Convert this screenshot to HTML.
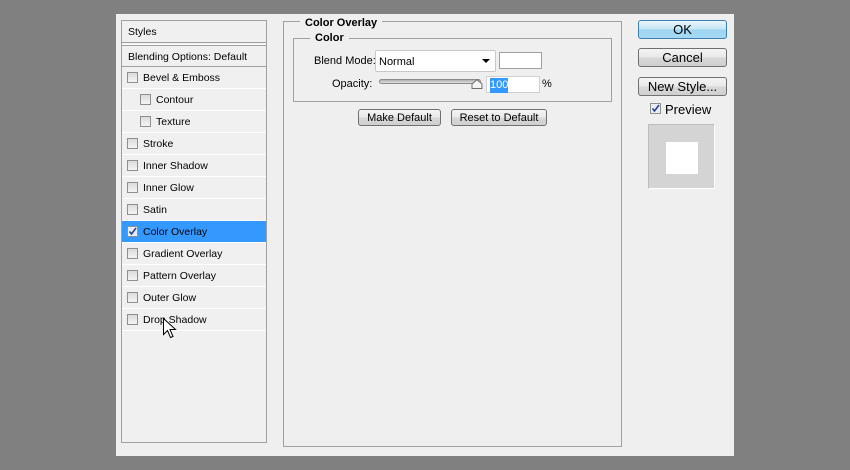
<!DOCTYPE html>
<html><head><meta charset="utf-8"><style>
*{box-sizing:border-box;margin:0;padding:0}
body{width:850px;height:470px;background:#808080;position:relative;overflow:hidden;font-family:"Liberation Sans",sans-serif;font-size:11px;color:#000}
.dlg{position:absolute;left:116px;top:14px;width:618px;height:442px;background:#efefef}
.a{position:absolute}
.list{left:5px;top:6px;width:146px;height:423px;border:1px solid #a0a0a0;background:#f0f0f0}
.row{position:absolute;left:0;width:144px;height:22px;border-bottom:1px solid #fff;line-height:23px;font-size:10.5px}
.cb{position:absolute;top:5px;width:11px;height:11px;border:1px solid #8f8f8f;background:linear-gradient(#dcdcdc,#f4f4f4)}
.fs{border:1px solid #a0a0a0}
.btn{position:absolute;border:1px solid #707070;border-radius:3px;background:linear-gradient(#f4f4f4 0%,#e8e8e8 50%,#d8d8d8 51%,#cfcfcf 100%);text-align:center}
</style></head><body>
<div class="dlg">
 <div class="a list">
  <div class="row" style="top:0;height:22px;border-bottom:1px solid #a0a0a0;padding-left:6px">Styles</div>
  <div class="a" style="left:0;top:23px;width:144px;height:2px;border-bottom:1px solid #a0a0a0;background:#fff"></div>
  <div class="row" style="top:25px;height:21px;border-bottom:1px solid #a0a0a0;padding-left:6px">Blending Options: Default</div>
  <div class="row" style="top:46px"><span class="cb" style="left:5px"></span><span class="a" style="left:21px">Bevel &amp; Emboss</span></div>
  <div class="row" style="top:68px"><span class="cb" style="left:18px"></span><span class="a" style="left:34px">Contour</span></div>
  <div class="row" style="top:90px"><span class="cb" style="left:18px"></span><span class="a" style="left:34px">Texture</span></div>
  <div class="row" style="top:112px"><span class="cb" style="left:5px"></span><span class="a" style="left:21px">Stroke</span></div>
  <div class="row" style="top:134px"><span class="cb" style="left:5px"></span><span class="a" style="left:21px">Inner Shadow</span></div>
  <div class="row" style="top:156px"><span class="cb" style="left:5px"></span><span class="a" style="left:21px">Inner Glow</span></div>
  <div class="row" style="top:178px"><span class="cb" style="left:5px"></span><span class="a" style="left:21px">Satin</span></div>
  <div class="row" style="top:200px;background:#3399ff"><span class="cb" style="left:5px;background:#e8eef8"><svg width="9" height="9" style="position:absolute;left:0;top:0"><path d="M1.5 4.5 L3.5 7 L8 1" stroke="#2a3f8f" stroke-width="1.6" fill="none"/></svg></span><span class="a" style="left:21px">Color Overlay</span></div>
  <div class="row" style="top:222px"><span class="cb" style="left:5px"></span><span class="a" style="left:21px">Gradient Overlay</span></div>
  <div class="row" style="top:244px"><span class="cb" style="left:5px"></span><span class="a" style="left:21px">Pattern Overlay</span></div>
  <div class="row" style="top:266px"><span class="cb" style="left:5px"></span><span class="a" style="left:21px">Outer Glow</span></div>
  <div class="row" style="top:288px"><span class="cb" style="left:5px"></span><span class="a" style="left:21px">Drop Shadow</span></div>
 </div>
 <div class="a fs" style="left:167px;top:7px;width:339px;height:426px"></div>
 <div class="a" style="left:184px;top:3px;padding:0 5px;background:#efefef;font-weight:bold">Color Overlay</div>
 <div class="a fs" style="left:177px;top:24px;width:319px;height:64px"></div>
 <div class="a" style="left:194px;top:18px;padding:0 5px;background:#efefef;font-weight:bold">Color</div>
 <div class="a" style="left:198px;top:41px">Blend Mode:</div>
 <div class="a" style="left:259px;top:36px;width:121px;height:22px;background:#fff;border:1px solid #c8c8c8;border-radius:2px;padding:5px 3px">Normal
  <svg width="8" height="5" style="position:absolute;right:5px;top:8px"><path d="M0 0H8L4 4Z" fill="#000"/></svg></div>
 <div class="a" style="left:383px;top:38px;width:43px;height:17px;background:#fff;border:1px solid #a0a0a0"></div>
 <div class="a" style="left:216px;top:64px">Opacity:</div>
 <div class="a" style="left:263px;top:65px;width:102px;height:5px;border:1px solid #8a8a8a;border-radius:3px;background:linear-gradient(#b0b0b0,#e0e0e0)"></div>
 <svg class="a" style="left:355px;top:65px" width="12" height="10"><path d="M1 9.5V5L6 0.8L11 5V9.5Z" fill="#f4f4f4" stroke="#707070"/></svg>
 <div class="a" style="left:370px;top:62px;width:54px;height:17px;background:#fff;border:1px solid #d0d0d0"><span class="a" style="left:3px;top:1px;background:#3399ff;color:#fff;padding:1px 0;line-height:13px">100</span></div>
 <div class="a" style="left:426px;top:64px">%</div>
 <div class="btn" style="left:242px;top:95px;width:83px;height:17px;line-height:17px">Make Default</div>
 <div class="btn" style="left:335px;top:95px;width:96px;height:17px;line-height:17px">Reset to Default</div>
 <div class="btn" style="left:522px;top:6px;width:89px;height:19px;line-height:18px;font-size:13px;border-color:#3c7fb1;background:linear-gradient(#e8f6fd,#c4e5f6 50%,#9dd5f1 51%,#a7d9f5)">OK</div>
 <div class="btn" style="left:522px;top:34px;width:89px;height:19px;line-height:18px;font-size:13px">Cancel</div>
 <div class="btn" style="left:522px;top:63px;width:89px;height:19px;line-height:18px;font-size:13px">New Style...</div>
 <span class="cb" style="left:534px;top:89px;background:#e8eef8"><svg width="9" height="9" style="position:absolute;left:0;top:0"><path d="M1.5 4.5 L3.5 7 L8 1" stroke="#2a3f8f" stroke-width="1.6" fill="none"/></svg></span>
 <div class="a" style="left:549px;top:88px;font-size:13px">Preview</div>
 <div class="a" style="left:532px;top:110px;width:67px;height:65px;background:#d4d4d4;border:1px solid #bdbdbd;border-right-color:#fff;border-bottom-color:#fff"></div>
 <div class="a" style="left:550px;top:128px;width:32px;height:32px;background:#fff"></div>
</div>
<svg class="a" style="left:163px;top:318px" width="14" height="22"><path d="M0.5 0.5V16.5L4.5 12.5L7.5 19.5L10 18.5L7 11.5H12.5Z" fill="#fff" stroke="#000"/></svg>
</body></html>
